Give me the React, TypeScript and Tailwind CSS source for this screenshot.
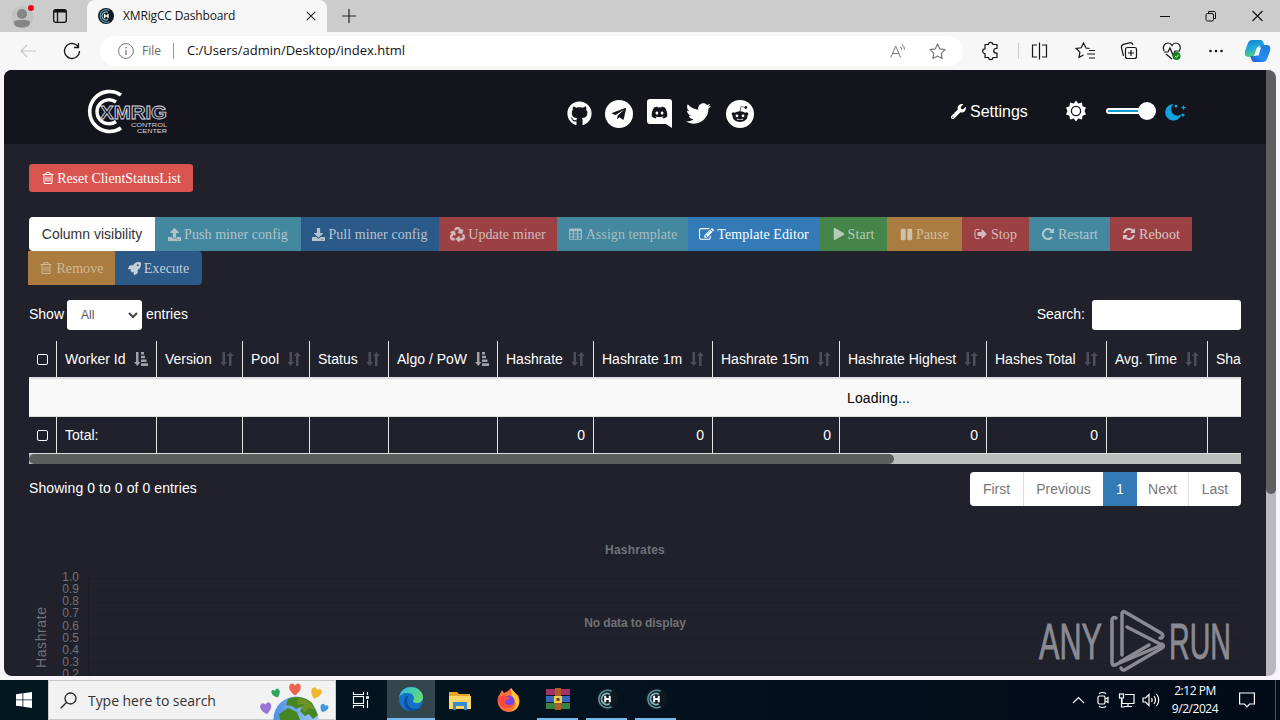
import type { ReactNode } from "react"
import {
  FaDiscord,
  FaDownload,
  FaGithub,
  FaPause,
  FaPlay,
  FaRecycle,
  FaRedditAlien,
  FaRocket,
  FaTelegramPlane,
  FaTwitter,
  FaUpload,
  FaWrench,
} from "react-icons/fa"

const SANS = "font-['Liberation_Sans',Arial,sans-serif]"
const SERIF = "font-['Liberation_Serif',serif]"
const UI = "font-['Open_Sans',sans-serif]"

const TRASH =
  "M704 736v576q0 14-9 23t-23 9h-64q-14 0-23-9t-9-23v-576q0-14 9-23t23-9h64q14 0 23 9t9 23zm256 0v576q0 14-9 23t-23 9h-64q-14 0-23-9t-9-23v-576q0-14 9-23t23-9h64q14 0 23 9t9 23zm256 0v576q0 14-9 23t-23 9h-64q-14 0-23-9t-9-23v-576q0-14 9-23t23-9h64q14 0 23 9t9 23zm128 724v-948h-896v948q0 22 7 40.5t14.5 27 10.5 8.5h832q3 0 10.5-8.5t14.5-27 7-40.5zm-672-1076h448l-48-117q-7-9-17-11h-317q-10 2-17 11zm928 32v64q0 14-9 23t-23 9h-96v948q0 83-47 143.5t-113 60.5h-832q-66 0-113-58.5t-47-141.5v-952h-96q-14 0-23-9t-9-23v-64q0-14 9-23t23-9h309l70-167q15-37 54-63t79-26h320q40 0 79 26t54 63l70 167h309q14 0 23 9t9 23z"
const REFRESH =
  "M1639 1056q0 5-1 7-64 268-268 434.5t-478 166.5q-146 0-282.5-55t-243.5-157l-129 129q-19 19-45 19t-45-19-19-45v-448q0-26 19-45t45-19h448q26 0 45 19t19 45-19 45l-137 137q71 66 161 102t187 36q134 0 250-65t186-179q11-17 53-117 8-23 30-23h192q13 0 22.5 9.5t9.5 22.5zm25-800v448q0 26-19 45t-45 19h-448q-26 0-45-19t-19-45 19-45l138-138q-148-137-349-137-134 0-250 65t-186 179q-11 17-53 117-8 23-30 23h-199q-13 0-22.5-9.5t-9.5-22.5v-7q65-268 270-434.5t480-166.5q146 0 284 55.5t245 156.5l130-129q19-19 45-19t45 19 19 45z"
const ROTATE =
  "M1664 256v448q0 26-19 45t-45 19h-448q-42 0-59-40-17-39 14-69l138-138q-148-137-349-137-104 0-198.5 40.5t-163.5 109.5-109.5 163.5-40.5 198.5 40.5 198.5 109.5 163.5 163.5 109.5 198.5 40.5q119 0 225-52t179-147q7-10 23-12 15 0 25 9l137 138q9 8 9.5 20.5t-7.5 22.5q-109 132-264 204.5t-327 72.5q-156 0-298-61t-245-164-164-245-61-298 61-298 164-245 245-164 298-61q147 0 284.5 55.5t244.5 156.5l130-129q29-31 70-14 39 17 39 59z"
const SIGN_OUT =
  "M704 1440q0 4 1 20t.5 26.5-3 23.5-10 19.5-20.5 6.5h-320q-119 0-203.5-84.5t-84.5-203.5v-704q0-119 84.5-203.5t203.5-84.5h320q13 0 22.5 9.5t9.5 22.5q0 4 1 20t.5 26.5-3 23.5-10 19.5-20.5 6.5h-320q-66 0-113 47t-47 113v704q0 66 47 113t113 47h312l11.5 1 11.5 3 8 5.5 7 9 2 13.5zm928-544q0 26-19 45l-544 544q-19 19-45 19t-45-19-19-45v-288h-448q-26 0-45-19t-19-45v-384q0-26 19-45t45-19h448v-288q0-26 19-45t45-19 45 19l544 544q19 19 19 45z"
const EDIT =
  "M888 1184l116-116-152-152-116 116v56h96v96h56zm440-720q-16-16-33 1l-350 350q-17 17-1 33t33-1l350-350q17-17 1-33zm80 594v190q0 119-84.5 203.5t-203.5 84.5h-832q-119 0-203.5-84.5t-84.5-203.5v-832q0-119 84.5-203.5t203.5-84.5h832q63 0 117 25 15 7 18 23 3 17-9 29l-49 49q-14 14-32 8-23-6-45-6h-832q-66 0-113 47t-47 113v832q0 66 47 113t113 47h832q66 0 113-47t47-113v-126q0-13 9-22l64-64q15-15 35-7t20 29zm-96-738l288 288-672 672h-288v-288zm444 132l-92 92-288-288 92-92q28-28 68-28t68 28l152 152q28 28 28 68t-28 68z"
const TABLE =
  "M224 192h1344q96 0 96 96v1152q0 96-96 96H224q-96 0-96-96V288q0-96 96-96zM256 512v256h320V512zm448 0v256h384V512zm512 0v256h320V512zM256 864v256h320V864zm448 0v256h384V864zm512 0v256h320V864zM256 1216v224h320v-224zm448 0v224h384v-224zm512 0v224h320v-224z"

function Awesome({ d, size = 14 }: { d: string; size?: number }) {
  return (
    <svg width={size} height={size} viewBox="0 0 1792 1792" fill="currentColor" fillRule="evenodd" className="shrink-0">
      <path d={d} />
    </svg>
  )
}

type Action = { label: string; icon: ReactNode; className: string }

const ACTIONS: Action[] = [
  { label: "Push miner config", icon: <FaUpload size={13} />, className: "w-[146px] bg-[#43889f] text-[#b3c2c9]" },
  { label: "Pull miner config", icon: <FaDownload size={13} />, className: "w-[138px] bg-[#2b5988] text-[#b6c3d0]" },
  { label: "Update miner", icon: <FaRecycle size={15} stroke="currentColor" strokeWidth={24} />, className: "w-[118px] bg-[#9b4143] text-[#d3bbbd]" },
  { label: "Assign template", icon: <Awesome d={TABLE} size={15} />, className: "w-[131px] bg-[#43889f] text-[#a9bcc4]" },
  { label: "Template Editor", icon: <Awesome d={EDIT} size={15} />, className: "w-[132px] bg-[#337ab7] text-white" },
  { label: "Start", icon: <FaPlay size={12} />, className: "w-[67px] bg-[#45854a] text-[#b7cbb9]" },
  { label: "Pause", icon: <FaPause size={13} />, className: "w-[75px] bg-[#aa7c40] text-[#cfc0a9]" },
  { label: "Stop", icon: <Awesome d={SIGN_OUT} />, className: "w-[67px] bg-[#9b4143] text-[#d3bbbd]" },
  { label: "Restart", icon: <Awesome d={ROTATE} />, className: "w-[81px] bg-[#43889f] text-[#b3c9d0]" },
  { label: "Reboot", icon: <Awesome d={REFRESH} />, className: "w-[82px] bg-[#9b4143] text-[#d9c5c7]" },
]

const COLUMNS = [
  { label: "Worker Id", width: "w-[100px]", total: "Total:", sorted: true },
  { label: "Version", width: "w-[86px]" },
  { label: "Pool", width: "w-[67px]" },
  { label: "Status", width: "w-[79px]" },
  { label: "Algo / PoW", width: "w-[109px]", sorted: true },
  { label: "Hashrate", width: "w-[96px]", total: "0" },
  { label: "Hashrate 1m", width: "w-[119px]", total: "0" },
  { label: "Hashrate 15m", width: "w-[127px]", total: "0" },
  { label: "Hashrate Highest", width: "w-[147px]", total: "0" },
  { label: "Hashes Total", width: "w-[120px]", total: "0" },
  { label: "Avg. Time", width: "w-[101px]" },
]

const TICKS = ["1.0", "0.9", "0.8", "0.7", "0.6", "0.5", "0.4", "0.3", "0.2"]

function Fav({ size = 16 }: { size?: number }) {
  return (
    <svg width={size} height={size} viewBox="0 0 24 24" fill="none">
      <circle cx="12" cy="12" r="12" fill="#10191f" />
      <path d="M17 3.500A9.500 9.500 0 1 0 17 20.500" stroke="#5d91a3" strokeWidth="1.800" />
      <path d="M15 6.800A6 6 0 1 0 15 17.200" stroke="#86b3c0" strokeWidth="1.800" />
      <path d="M10 8.500v7M10 12h5M15 8.500v7" stroke="#f1f8fa" strokeWidth="2.200" />
    </svg>
  )
}

function SortIcon({ sorted }: { sorted?: boolean }) {
  return sorted ? (
    <svg width="14" height="14" viewBox="0 0 14 14" fill="#a0a1a6">
      <path d="M2 0h2.500v10h2L3.300 14 0 10h2zM7 0h3v2.500H7zM7 3.800h4v2.500H7zM7 7.500h5.500V10H7zM7 11.300h7V14H7z" />
    </svg>
  ) : (
    <svg width="14" height="14" viewBox="0 0 14 14" fill="#4d4e56">
      <path d="M2.500 0H5v10h2L3.700 14 .3 10h2.200zM9 14h2.500V4h2.200L10.300 0 7 4h2z" />
    </svg>
  )
}

function Copilot() {
  return (
    <svg width="26" height="24" viewBox="0 0 26 24">
      <defs>
        <linearGradient id="cpA" x1="0" y1="0" x2=".3" y2="1">
          <stop offset="0" stopColor="#1478d4" />
          <stop offset=".5" stopColor="#20a7dc" />
          <stop offset="1" stopColor="#55cf7b" />
        </linearGradient>
        <linearGradient id="cpB" x1="1" y1="0" x2="0" y2="1">
          <stop offset="0" stopColor="#167bd5" />
          <stop offset=".6" stopColor="#2a8cf1" />
          <stop offset="1" stopColor="#1758c9" />
        </linearGradient>
      </defs>
      <path d="M7 1h8c3 0 3.500 2 4.500 6H16c-3 0-4 1-5 4l-1 3c-1 3-2 4-5 4H4c-4 0-5-2-4-6l3-8c1-2 2-3 4-3z" fill="url(#cpA)" />
      <path d="M18 23h-8c-3 0-3.500-2-4.500-6H8c3 0 4-1 5-4l1-3c1-3 2-4 5-4h2c4 0 5 2 4 6l-3 8c-1 2-2 3-4 3z" fill="url(#cpB)" />
      <path d="M12.500 8.500h3.500l-2.500 8H10z" fill="#f5faff" />
    </svg>
  )
}

function TabStrip() {
  return (
    <div className="flex h-8 bg-[#cccccc]">
      <div className="flex w-[87px] items-center gap-[21px] rounded-br-lg pl-3">
        <svg width="22" height="26" viewBox="0 0 22 26">
          <circle cx="10" cy="14" r="11" fill="#bcbcbc" opacity=".6" />
          <circle cx="10" cy="11" r="5" fill="#858585" />
          <path d="M2 20c0-3 3-3 8-3s8 0 8 3c0 3-4 4.500-8 4.500S2 23 2 20z" fill="#858585" />
          <circle cx="19" cy="5" r="3" fill="#e30b17" />
        </svg>
        <svg width="14" height="14" viewBox="0 0 14 14" fill="none" stroke="#111" strokeWidth="1.300" className="-ml-[2px]">
          <rect x=".7" y=".7" width="12.600" height="12.600" rx="2" />
          <path d="M1 2.200h12" strokeWidth="2.600" />
          <path d="M4.500 3v10" />
        </svg>
      </div>
      <div className="flex w-[240px] items-center rounded-t-lg bg-[#f7f7f7] pl-[11px]">
        <Fav />
        <span className="ml-[9px] flex-1 text-[12px] tracking-[-0.150px] text-[#151515]">XMRigCC Dashboard</span>
        <svg width="10" height="10" viewBox="0 0 10 10" stroke="#222" strokeWidth="1.100" className="mr-[11px]">
          <path d="M.8.8l8.400 8.400M9.200.8L.8 9.200" />
        </svg>
      </div>
      <svg width="14" height="14" viewBox="0 0 14 14" stroke="#222" strokeWidth="1.200" className="ml-[15px] mt-[9px]">
        <path d="M7 0v14M0 7h14" />
      </svg>
      <svg width="104" height="12" viewBox="0 0 104 12" fill="none" stroke="#111" className="ml-auto mr-[17px] mt-[10px]">
        <path d="M1 6.500h10" />
        <rect x="47" y="3.500" width="7.500" height="7.500" rx="1.500" />
        <path d="M49.500 3V1.500h5.500c1 0 1.500.5 1.500 1.500v5.500h-1.500" />
        <path d="M93.500 1l10 10M103.500 1l-10 10" strokeWidth="1.100" />
      </svg>
    </div>
  )
}

function AddressBar() {
  return (
    <div className="flex h-[38px] items-center bg-[#f7f7f7] pl-5">
      <svg width="16" height="14" viewBox="0 0 16 14" fill="none" stroke="#c9c9c9" strokeWidth="1.200">
        <path d="M16 7H1M7 1L1 7l6 6" />
      </svg>
      <svg width="18" height="18" viewBox="0 0 18 18" fill="none" stroke="#1b1b1b" strokeWidth="1.300" className="ml-[27px]">
        <path d="M16.500 9A7.500 7.500 0 1 1 13.500 3L15.500 5M15.500 1v4.500H11" />
      </svg>
      <div className="ml-[19px] flex h-[30px] w-[863px] items-center rounded-full bg-white pl-[18px] pr-[17px]">
        <svg width="16" height="16" viewBox="0 0 16 16" fill="none" stroke="#777">
          <circle cx="8" cy="8" r="7.400" />
          <path d="M8 7v5M8 4v1.500" strokeWidth="1.300" />
        </svg>
        <span className="ml-2 w-5 text-[12px] text-[#666]">File</span>
        <span className="ml-[11px] h-4 w-px bg-[#999]" />
        <span className="ml-[13px] flex-1 text-[13px] tracking-[-0.010px] text-[#111]">C:/Users/admin/Desktop/index.html</span>
        <svg width="16" height="16" viewBox="0 0 16 16" fill="none" stroke="#777">
          <path d="M.800 14.500L5.700 3l4.800 11.500M2.500 10.500h6.400M10 3.500c1.300.8 1.600 2 1.600 3.300M11.600 1c2 1.500 2.800 3.300 2.800 5.800" />
        </svg>
        <svg width="17" height="17" viewBox="0 0 17 17" fill="none" stroke="#777" strokeWidth="1.100" className="ml-[23px]">
          <path d="M8.500 1l2.300 4.900 5.300.7-3.900 3.700 1 5.300-4.700-2.600-4.700 2.600 1-5.300L.9 6.600l5.300-.7z" strokeLinejoin="round" />
        </svg>
      </div>
      <svg width="276" height="20" viewBox="0 0 276 20" fill="none" stroke="#151515" strokeWidth="1.200" className="ml-[15px]">
        <path d="M10.500 3.500a2.200 2.200 0 0 1 4.400 0H19v4h-1a2.300 2.300 0 0 0 0 4.600h1v4.400h-4a2.200 2.200 0 0 1-4.400 0H7v-4a2.300 2.300 0 0 1 0-4.600v-4.400z" strokeLinejoin="round" />
        <path d="M40.500 2v16" stroke="#d0d0d0" />
        <path d="M59 4h-4.500v12H59M64 4h4.500v12H64M61.500 1.500v17" />
        <path d="M107.500 6.500l-3.500-.5-2.500-5-2.300 4.800-5 .7 3.700 3.600-.9 5.200 4.500-2.300M107 8.500h6M105 12h8M107 16h6" transform="translate(4 1)" />
        <rect x="147.500" y="6.500" width="11" height="11" rx="2" />
        <path d="M153 9v6M150 12h6M145.500 15l-2-8c-.4-2 0-3 2-3.600l6-1.600c2-.4 3 0 3.500 2" />
        <path d="M186 10c-2-5 1-8 4-8 2 0 3.500 1.500 4 2.500.5-1 2-2.500 4-2.500 3.500 0 5.500 4 3.500 7.500M186 11h4l2-4 3 7 2-4h5M188 13l6 5" />
        <circle cx="198.500" cy="15" r="4" fill="#16801c" stroke="none" />
        <path d="M197 15l1.500 1.300 2-2.500" stroke="#fff" strokeWidth=".9" />
        <g fill="#151515" stroke="none">
          <circle cx="232.500" cy="10" r="1.300" />
          <circle cx="238" cy="10" r="1.300" />
          <circle cx="243.500" cy="10" r="1.300" />
        </g>
      </svg>
      <div className="-ml-[9px]">
        <Copilot />
      </div>
    </div>
  )
}

function Logo() {
  return (
    <svg width="84" height="46" viewBox="0 0 84 46" fill="none" className="font-['Liberation_Sans',sans-serif]">
      <path d="M36 7A20 20 0 1 0 36 40" stroke="#fff" strokeWidth="3.600" />
      <path d="M31 14A12 12 0 1 0 31 33.500" stroke="#fff" strokeWidth="3.400" />
      <text x="15" y="31" fontSize="17.500" fontWeight="700" stroke="#dedee2" strokeWidth=".8" fill="#14151c" textLength="67" lengthAdjust="spacingAndGlyphs">XMRIG</text>
      <text x="46" y="38.500" fontSize="6" fill="#d5d5d8" textLength="36" lengthAdjust="spacingAndGlyphs">CONTROL</text>
      <text x="52" y="45" fontSize="6" fill="#d5d5d8" textLength="30" lengthAdjust="spacingAndGlyphs">CENTER</text>
    </svg>
  )
}

function Header() {
  return (
    <header className="flex h-[74px] items-center bg-[#14151c] pl-[81px] text-white">
      <div className="mt-2 h-[46px]">
        <Logo />
      </div>
      <div className="ml-[393px] mt-[13px] flex items-center">
        <div className="flex w-[34px] justify-center"><FaGithub size={25} /></div>
        <div className="ml-[9px] flex h-7 w-7 items-center justify-center rounded-full bg-white text-[#14151c]">
          <FaTelegramPlane size={16} />
        </div>
        <svg width="25" height="29" viewBox="0 0 25 29" className="ml-[14px]">
          <path d="M3 0h19a3 3 0 0 1 3 3v26l-6-4H3a3 3 0 0 1-3-3V3a3 3 0 0 1 3-3z" fill="#fff" />
          <FaDiscord x="4" y="5" size={17} color="#14151c" />
        </svg>
        <FaTwitter size={25} className="ml-[14px]" />
        <div className="ml-[15px] flex h-7 w-7 items-center justify-center rounded-full bg-white text-[#14151c]">
          <FaRedditAlien size={18} />
        </div>
      </div>
      <div className="ml-[197px] mt-[9px] flex items-center text-[16px]">
        <FaWrench size={15} className="mr-[4px]" />
        <span className="w-[57px]">Settings</span>
      </div>
      <svg width="124" height="24" viewBox="0 0 124 24" className="ml-[37px] mt-2">
        <path
          d="M12 1.500l2.300 3 3.700-1 .5 3.700 3.500 1.400L20.500 12l1.500 3.400-3.500 1.400-.5 3.700-3.700-1-2.300 3-2.300-3-3.700 1-.5-3.700L2 15.400 3.500 12 2 8.600l3.500-1.400.5-3.700 3.700 1z"
          fill="#fff"
        />
        <circle cx="12" cy="12" r="4.600" fill="#fff" stroke="#14151c" strokeWidth="1.300" />
        <rect x="42" y="9" width="46" height="6" rx="3" fill="#fff" />
        <rect x="44" y="11" width="40" height="2" fill="#119bd2" />
        <circle cx="83" cy="12" r="9" fill="#fff" />
        <path d="M109 5.500a6.500 6.500 0 0 0 8.500 9.800A8.300 8.300 0 1 1 109 5z" fill="#11a3dd" />
        <g fill="#11a3dd">
          <circle cx="112" cy="7" r="1.500" />
          <path d="M119.500 6l.8 2 2.200.5-2.200.8-.8 2-.8-2-2.200-.8 2.200-.5z" />
          <circle cx="119" cy="16" r="1.600" />
        </g>
      </svg>
    </header>
  )
}

function ActionButton({ action }: { action: Action }) {
  return (
    <button className={`flex h-[34px] items-center justify-center gap-[3px] whitespace-nowrap text-[14px] tracking-[0.070px] ${SERIF} ${action.className}`}>
      {action.icon}
      {action.label}
    </button>
  )
}

function Box() {
  return <span className="block h-[11px] w-[11px] rounded-[2px] border border-white" />
}

function WorkerTable() {
  return (
    <div className="mt-[11px] w-[1212px] overflow-hidden whitespace-nowrap">
      <div className="flex h-9 w-[1300px]">
        <div className="flex w-7 shrink-0 items-center justify-center border-r border-[#e6e6e6] pr-px"><Box /></div>
        {COLUMNS.map((c) => (
          <div key={c.label} className={`flex shrink-0 items-center justify-between border-r border-[#e6e6e6] pl-2 pr-2 ${c.width}`}>
            {c.label}
            <SortIcon sorted={c.sorted} />
          </div>
        ))}
        <div className="flex items-center pl-2">Sha</div>
      </div>
      <div className="flex h-10 items-center border-b border-t-2 border-[#dddddd] bg-[#f8f8f8] pl-[818px] pt-[2px] tracking-[0.150px] text-black">
        Loading...
      </div>
      <div className="flex h-9 w-[1300px]">
        <div className="flex w-7 shrink-0 items-center justify-center border-r border-[#e6e6e6] pr-px"><Box /></div>
        {COLUMNS.map((c) => (
          <div
            key={c.label}
            className={`flex shrink-0 items-center border-r border-[#e6e6e6] px-2 ${c.width} ${c.total === "0" ? "justify-end" : ""}`}
          >
            {c.total}
          </div>
        ))}
      </div>
      <div className="h-[11px] border-t border-[#dddddd] bg-[#bcbebd]">
        <div className="h-[10px] w-[865px] rounded-full bg-[#5b5e5d]" />
      </div>
    </div>
  )
}

function Chart() {
  return (
    <div className="mt-[36px] h-[134px] overflow-hidden text-[#717178]">
      <div className="text-center text-[12px] font-bold leading-4 tracking-[0.200px]">Hashrates</div>
      <div className="relative mt-[13px] flex">
        <div className="flex w-6 justify-center">
          <span className="mt-[35px] h-[62px] rotate-180 text-[14px] leading-6 tracking-[0.600px] [writing-mode:vertical-rl]">Hashrate</span>
        </div>
        <div className="w-[26px] text-right text-[12px]">
          {TICKS.map((t) => (
            <div key={t} className="h-[12.150px] leading-[12px]">{t}</div>
          ))}
        </div>
        <div className="ml-[9px] mt-[7px] flex-1 border-l border-[#1b1c24]">
          {TICKS.map((t) => (
            <div key={t} className="h-[12.150px] border-t border-[#1d1e27]" />
          ))}
        </div>
        <div className="absolute inset-x-0 top-[44px] text-center text-[12px] font-bold leading-4 tracking-[-0.100px]">No data to display</div>
      </div>
    </div>
  )
}

function Watermark() {
  return (
    <svg width="194" height="64" viewBox="0 0 194 64" fill="none" className="absolute bottom-[3px] right-[34px] font-['Liberation_Sans',sans-serif]">
      <g fill="#8b8a93" stroke="#8b8a93" strokeWidth=".9">
        <text x="1" y="50" fontSize="50" textLength="63" lengthAdjust="spacingAndGlyphs">ANY</text>
        <text x="131" y="50" fontSize="50" textLength="62" lengthAdjust="spacingAndGlyphs">RUN</text>
      </g>
      <g stroke="#8b8a93" strokeWidth="3.500" strokeLinecap="round" strokeLinejoin="round">
        <path d="M84 46V5c0-2 1-3 3-2l36 21c3 2 2 5-1 5" />
        <path d="M89 18l35 18-45 19c-3 2-5 2-5-2V11c0-2 2-3 4-2" />
        <path d="M111 36L82 53M124 35c2 1 2 3 0 4L88 60c-2 2-4 1-5-1" />
      </g>
    </svg>
  )
}

function Dashboard() {
  return (
    <div className={`relative h-[606px] w-[1262px] overflow-hidden rounded-l-lg bg-[#20212a] text-[14px] text-white ${SANS}`}>
      <Header />
      <main className="px-[25px] pt-5">
        <button className={`flex h-7 w-[164px] items-center justify-center gap-[2px] rounded-[3px] bg-[#d9534f] text-[14px] ${SERIF}`}>
          <Awesome d={TRASH} />
          <span className="w-[125px] whitespace-nowrap tracking-[-0.050px]">Reset ClientStatusList</span>
        </button>
        <div className="mt-[25px] flex">
          <button className="h-[34px] w-[126px] rounded-l-[4px] bg-white text-[#333]">Column visibility</button>
          {ACTIONS.map((a) => (
            <ActionButton key={a.label} action={a} />
          ))}
        </div>
        <div className="-ml-px flex">
          <ActionButton action={{ label: "Remove", icon: <Awesome d={TRASH} />, className: "w-[87px] bg-[#aa7c40] text-[#cfb996]" }} />
          <ActionButton action={{ label: "Execute", icon: <FaRocket size={13} />, className: "w-[87px] rounded-r-[4px] bg-[#2b5988] text-[#c3ced9]" }} />
        </div>
        <div className="mt-[15px] flex h-[30px] items-center">
          <span className="-mt-[2px] w-[34px]">Show</span>
          <div className="mx-1 flex h-[30px] w-[75px] items-center justify-between rounded-[3px] bg-white pl-[14px] pr-1 text-[12px] text-[#555]">
            All
            <svg width="10" height="7" viewBox="0 0 10 7" fill="none" stroke="#444" strokeWidth="2">
              <path d="M1 1l4 4 4-4" />
            </svg>
          </div>
          <span className="-mt-[2px]">entries</span>
          <span className="-mt-[2px] ml-auto mr-[7px]">Search:</span>
          <input className="h-[30px] w-[149px] rounded-[3px] bg-white" />
        </div>
        <WorkerTable />
        <div className="mt-2 flex justify-between">
          <span className="mt-[6px] tracking-[0.080px]">Showing 0 to 0 of 0 entries</span>
          <div className="flex h-[34px] overflow-hidden rounded-[4px] bg-white leading-[34px] text-[#777]">
            <span className="w-[54px] border-r border-[#ddd] text-center">First</span>
            <span className="w-[79px] text-center">Previous</span>
            <span className="w-[34px] bg-[#337ab7] text-center text-white">1</span>
            <span className="w-[52px] border-r border-[#ddd] text-center">Next</span>
            <span className="w-[52px] text-center">Last</span>
          </div>
        </div>
        <Chart />
      </main>
      <Watermark />
    </div>
  )
}

function EarthArt() {
  return (
    <svg width="74" height="39" viewBox="0 0 74 39">
      <defs>
        <linearGradient id="sea" x1="0" y1="0" x2="1" y2="0">
          <stop offset="0" stopColor="#4f8fe3" />
          <stop offset="1" stopColor="#9cc7f5" />
        </linearGradient>
        <path id="heart" d="M0 6C-7 1-6-4-3-5-1-5 0-3 0-3 0-3 1-5 3-5 6-4 7 1 0 6z" />
      </defs>
      <circle cx="38" cy="38" r="22.500" fill="url(#sea)" />
      <path d="M30 18c8-4 18-2 24 4l6 12-5 4-4-5-4 2-5-5 3-5-7 3-4-3-6-1zM21 33l9-6 9 4 3 8H22z" fill="#458622" />
      <path d="M40 17c8 0 14 5 17 12l-6-2-4 4-4-4 3-4-7 1z" fill="#6d9325" />
      <use href="#heart" transform="translate(37 8) scale(1.100)" fill="#ec644f" />
      <use href="#heart" transform="translate(18 12) rotate(-20) scale(.8)" fill="#31a461" />
      <use href="#heart" transform="translate(58 12) rotate(20)" fill="#f0b62c" />
      <use href="#heart" transform="translate(8 27) rotate(-10) scale(1.050)" fill="#9a75d3" />
      <use href="#heart" transform="translate(66 27) rotate(25) scale(.75)" fill="#3f97e1" />
    </svg>
  )
}

function Edge() {
  return (
    <svg width="24" height="24" viewBox="0 0 24 24">
      <defs>
        <linearGradient id="edA" x1="0" y1="0" x2="1" y2=".6">
          <stop offset="0" stopColor="#2bb8eb" />
          <stop offset="1" stopColor="#65dc71" />
        </linearGradient>
      </defs>
      <circle cx="12" cy="12" r="12" fill="#1272ca" />
      <path d="M0 11C1 3 7 0 12 0c7 0 12 5 12 10 0 4-3 6-6 6s-4-1-4-2 1-1 1-3c0-3-3-5-7-5-4 0-7 2-8 5z" fill="url(#edA)" />
      <path d="M8 14c0 5 4 8 9 8 2 0 4-1 5-2-2 3-6 4-9 4-4 0-8-4-8-9 0-3 2-6 5-7-1 2-2 3-2 6z" fill="#0c4c9b" />
    </svg>
  )
}

function RunningApp({ children }: { children: ReactNode }) {
  return (
    <div className="flex h-10 w-[49px] px-1">
      <div className="flex flex-1 items-center justify-center border-b-2 border-[#76b9ed]">{children}</div>
    </div>
  )
}

function Taskbar() {
  return (
    <footer className={`flex h-10 items-center bg-gradient-to-r from-[#021720] via-[#03121e] to-[#030a18] text-white ${UI}`}>
      <div className="flex w-12 justify-center">
        <svg width="16" height="16" viewBox="0 0 16 16" fill="#fff">
          <path d="M0 2.300L6.500 1.300v6.200H0zM7.300 1.200L16 0v7.500H7.300zM0 8.300h6.500v6.300L0 13.700zM7.300 8.300H16V16l-8.700-1.200z" />
        </svg>
      </div>
      <div className="flex h-10 w-[288px] items-center border border-[#c7c9ca] bg-[#f2f2f2] pl-[11px] pr-[3px] text-[#333]">
        <svg width="17" height="17" viewBox="0 0 17 17" fill="none" stroke="#222" strokeWidth="1.300">
          <circle cx="10.500" cy="6.500" r="5.500" />
          <path d="M6.500 10.500L.7 16.300" />
        </svg>
        <span className="ml-[11px] flex-1 whitespace-nowrap text-[14px] tracking-[-0.050px]">Type here to search</span>
        <EarthArt />
      </div>
      <div className="flex w-[51px] justify-center">
        <svg width="18" height="16" viewBox="0 0 18 16" fill="none" stroke="#fff" strokeWidth="1.100" className="-ml-[2px]">
          <path d="M1.500 0v2.500h10V0M1.500 16v-2.500h10V16M15.500 0v3M15.500 8v8" />
          <rect x="1.500" y="4.500" width="10" height="7" />
          <path d="M14 5.500h3" strokeWidth="2.500" />
        </svg>
      </div>
      <div className="flex h-10 w-[48px] items-center justify-center border-b-2 border-[#76b9ed] bg-[#33464e]"><Edge /></div>
      <div className="flex w-[49px] justify-center">
        <svg width="22" height="19" viewBox="0 0 22 19">
          <path d="M0 1h8l2 2h11v5H0z" fill="#e9a825" />
          <path d="M0 5h22v13H0z" fill="#ffd767" />
          <path d="M4 11h14v8h-3v-4H7v4H4z" fill="#358dd5" />
        </svg>
      </div>
      <div className="flex w-[49px] justify-center">
        <svg width="24" height="24" viewBox="0 0 24 24">
          <path d="M3 6l2-4 2 3 4-2 3-3 3 4 4 3c4 8 0 17-9 17C4 24-1 16 1 9z" fill="#ff7139" />
          <path d="M14 0l4 5 3 4c3 7-1 13-7 14 5-3 6-8 3-12-2-2-3-5-3-11z" fill="#ffcb36" />
          <circle cx="12" cy="13" r="5.500" fill="#7547e5" />
          <path d="M1 10c3-3 7-3 9-1l3 1c-2 2-4 1-5 4 0 3 4 4 8 2-3 7-15 6-15-6z" fill="#ff4a42" />
        </svg>
      </div>
      <RunningApp>
        <svg width="24" height="22" viewBox="0 0 24 22">
          <path d="M0 1h24v6H0z" fill="#a43262" />
          <path d="M0 8h24v6H0z" fill="#3868be" />
          <path d="M0 15h24v6H0z" fill="#388341" />
          <path d="M9 0h6v22H9z" fill="#b25d24" />
          <path d="M8 8h8v7H8z" fill="#efcf52" />
          <path d="M10.500 10h3v3h-3z" fill="#6e4312" />
        </svg>
      </RunningApp>
      <RunningApp><Fav size={22} /></RunningApp>
      <RunningApp><Fav size={22} /></RunningApp>
      <svg width="88" height="18" viewBox="0 0 88 18" fill="none" stroke="#fff" strokeWidth="1.200" className="ml-auto">
        <path d="M1 12l5.500-5.500L12 12" />
        <rect x="26" y="5" width="7" height="8" rx="1.500" />
        <path d="M33.500 8l2.500-1.500v5L33.500 10M27 2.500q3.500-2 7 0M27 15.500q3.500 2 7 0" />
        <path d="M53 3.500h9v9H50V8M56 12.500v3M52 15.500h8" />
        <rect x="47.500" y="3" width="4" height="4" />
        <path d="M49.500 7v9h3M71 7h2.500L77 3.500v11L73.500 11H71zM79.500 7q1.300 2 0 4M82 5q3 4 0 8M84.500 3q4.500 6 0 12" />
      </svg>
      <div className="ml-[8px] w-[54px] whitespace-nowrap text-center text-[12px] leading-[18px] tracking-[-0.450px]">
        <div>2:12 PM</div>
        <div>9/2/2024</div>
      </div>
      <svg width="16" height="16" viewBox="0 0 16 16" fill="none" stroke="#fff" strokeWidth="1.200" className="ml-[17px] mr-[20px]">
        <path d="M.6 1h14.800v11H10.500L8 14.800 5.500 12H.6z" />
      </svg>
      <span className="mr-1 h-10 w-px bg-[#46505a]" />
    </footer>
  )
}

export default function App() {
  return (
    <div className="h-[720px] w-[1280px] overflow-hidden bg-[#f7f7f7]">
      <div className={UI}>
        <TabStrip />
        <AddressBar />
      </div>
      <div className="flex h-[610px] bg-[#f7f5f9] pl-1">
        <Dashboard />
        <div className="h-[606px] w-[10px] overflow-hidden rounded-r-lg bg-[#b9b8bd]">
          <div className="h-[424px] rounded-b-full rounded-tr-lg bg-[#5f5e61]" />
        </div>
      </div>
      <Taskbar />
    </div>
  )
}
